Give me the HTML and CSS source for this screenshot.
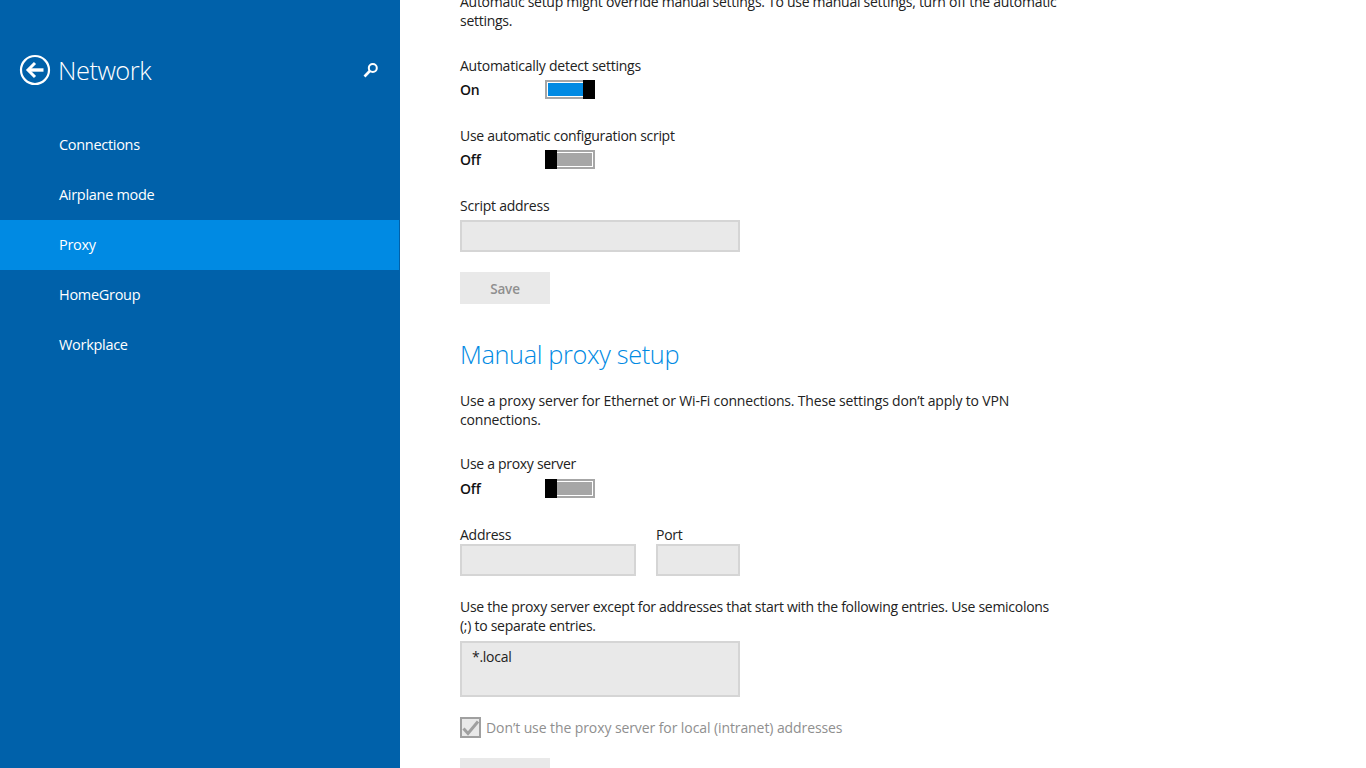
FILE: index.html
```html
<!DOCTYPE html>
<html lang="en">
<head>
<meta charset="utf-8">
<title>Network</title>
<link rel="stylesheet" href="styles.css">
</head>
<body>
<div class="app">
  <aside class="sidebar">
    <header class="side-head">
      <svg class="back" width="32" height="32" viewBox="0 0 32 32" fill="none" stroke="#fff"><circle cx="16" cy="16" r="14" stroke-width="2.2"/><path d="M24.5 16H10" stroke-width="3.4"/><path d="M16 9l-7 7 7 7" stroke-width="3"/></svg>
      <h1 class="side-title">Network</h1>
      <svg class="search" width="16" height="16" viewBox="0 0 16 16" fill="none" stroke="#fff"><circle cx="9.8" cy="6" r="4" stroke-width="2"/><path d="M6.8 9L1.5 14.5" stroke-width="2.6"/></svg>
    </header>
    <nav class="side-nav">
      <a class="nav-item">Connections</a>
      <a class="nav-item">Airplane mode</a>
      <a class="nav-item active">Proxy</a>
      <a class="nav-item">HomeGroup</a>
      <a class="nav-item">Workplace</a>
    </nav>
  </aside>
  <main class="content">
    <p class="para intro">Automatic setup might override manual settings. To use manual settings, turn off the automatic settings.</p>
    <div class="setting s1">
      <div class="label">Automatically detect settings</div>
      <div class="switch-row"><span class="state">On</span><span class="switch on"><span class="fill"></span><span class="thumb"></span></span></div>
    </div>
    <div class="setting s2">
      <div class="label">Use automatic configuration script</div>
      <div class="switch-row"><span class="state">Off</span><span class="switch"><span class="thumb"></span><span class="fill"></span></span></div>
    </div>
    <div class="field s3">
      <div class="label">Script address</div>
      <div class="input wide"></div>
    </div>
    <div class="button save">Save</div>
    <h2 class="heading">Manual proxy setup</h2>
    <p class="para p2">Use a proxy server for Ethernet or Wi-Fi connections. These settings don’t apply to VPN connections.</p>
    <div class="setting s4">
      <div class="label">Use a proxy server</div>
      <div class="switch-row"><span class="state">Off</span><span class="switch"><span class="thumb"></span><span class="fill"></span></span></div>
    </div>
    <div class="addr-row">
      <div class="field"><div class="label">Address</div><div class="input addr"></div></div>
      <div class="field"><div class="label">Port</div><div class="input port"></div></div>
    </div>
    <p class="para p3">Use the proxy server except for addresses that start with the following entries. Use semicolons (;) to separate entries.</p>
    <div class="textarea">*.local</div>
    <div class="check-row">
      <svg class="check" width="21" height="21" viewBox="0 0 21 21" fill="none"><rect x="1" y="1" width="19" height="19" fill="#e9e9e9" stroke="#a0a0a0" stroke-width="2"/><path d="M3.5 11.5l4.5 5L18 4.5" stroke="#a0a0a0" stroke-width="3"/></svg>
      <span class="check-label">Don’t use the proxy server for local (intranet) addresses</span>
    </div>
    <div class="button save2"></div>
  </main>
</div>
</body>
</html>
```
FILE: styles.css
```css
* { box-sizing: border-box; }
html, body { margin: 0; height: 100%; overflow: hidden; background: #fff; }
body { font-family: "Open Sans", "Noto Sans", sans-serif; font-size: 14px; color: #222; }
.app { display: flex; width: 1366px; height: 768px; overflow: hidden; }

.sidebar { width: 400px; flex: none; background: #0061aa; color: #fff; }
.side-head { height: 120px; display: flex; align-items: center; padding: 20px 20px 0 19px; }
.back { flex: none; margin-right: 7px; }
.side-title { flex: 1; margin: 0; font-size: 25.5px; font-weight: 300; letter-spacing: -0.5px; line-height: 40px; }
.search { flex: none; margin-right: 1px; margin-top: -1px; }
.side-nav { display: flex; flex-direction: column; }
.nav-item { height: 50px; width: 399px; padding-left: 59px; font-size: 14.5px; line-height: 49px; letter-spacing: -0.3px; }
.nav-item.active { background: #008ae3; }

.content { flex: none; width: 620px; margin-left: 60px; margin-top: -8px; }
.para { margin: 0; line-height: 19px; font-size: 14px; letter-spacing: -0.27px; color: #222; }
.intro { width: 600px; letter-spacing: -0.28px; }
.label { font-size: 14px; line-height: 20px; letter-spacing: -0.24px; }
.switch-row { display: flex; align-items: center; height: 19px; margin-top: 4px; }
.state { width: 85px; font-weight: 600; font-size: 14px; letter-spacing: -0.2px; color: #111; }
.switch { display: flex; width: 50px; height: 19px; border: 2px solid #a6a6a6; background: #fff; position: relative; }
.switch .fill { flex: 1; margin: 1px; background: #a6a6a6; }
.switch .thumb { width: 12px; margin: -2px; background: #000; flex: none; }
.switch .thumb + .fill { margin-left: 2px; margin-right: 1px; }
.switch.on .fill { background: #008ae3; margin: 1px 2px 1px 1px; }
.s1 { margin-top: 26px; }
.s2 { margin-top: 27px; }
.s2 .label, .s4 .label { letter-spacing: -0.3px; }
.s3 { margin-top: 27px; }
.input { height: 32px; background: #e9e9e9; border: 2px solid #d5d5d5; }
.wide { width: 280px; margin-top: 4px; }
.button { width: 90px; height: 32px; background: #e9e9e9; color: #8f8f8f; font-weight: 600; font-size: 13.5px; line-height: 35px; text-align: center; letter-spacing: -0.2px; }
.save { margin-top: 20px; }
.heading { margin: 31px 0 0; font-size: 25.3px; line-height: 38px; font-weight: 300; color: #008ae3; letter-spacing: -0.35px; }
.p2 { width: 600px; margin-top: 18px; letter-spacing: -0.17px; }
.s4 { margin-top: 25px; }
.s4 .switch-row { margin-top: 5px; }
.addr-row { display: flex; gap: 20px; margin-top: 27px; }
.addr-row .label { height: 19px; }
.addr { width: 176px; }
.port { width: 84px; }
.p3 { width: 600px; margin-top: 21px; letter-spacing: -0.28px; }
.textarea { width: 280px; height: 56px; margin-top: 6px; background: #e9e9e9; border: 2px solid #d5d5d5; padding: 4px 10px; font-size: 14px; line-height: 20px; letter-spacing: -0.27px; }
.check-row { display: flex; align-items: center; gap: 5px; margin-top: 20px; height: 21px; }
.check { flex: none; }
.check-label { color: #8f8f8f; font-size: 14px; letter-spacing: -0.09px; line-height: 19px; }
.save2 { margin-top: 20px; }
```
